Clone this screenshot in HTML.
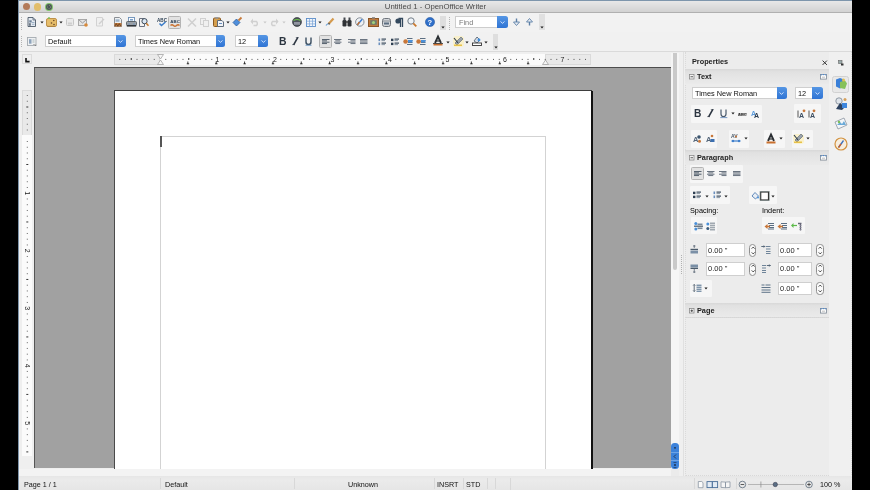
<!DOCTYPE html>
<html><head><meta charset="utf-8">
<style>
*{margin:0;padding:0;box-sizing:border-box}
html,body{width:870px;height:490px;overflow:hidden;background:#000;font-family:"Liberation Sans",sans-serif}
.a{position:absolute}
.t{white-space:nowrap;line-height:1.2;will-change:transform}
svg{overflow:visible;will-change:transform}
</style></head><body>
<div class="a" style="left:0px;top:0px;width:870px;height:490px;background:#000"></div>
<div class="a" style="left:18px;top:0px;width:834.4px;height:490px;background:#efefef"></div>
<div class="a" style="left:18px;top:0px;width:1.2px;height:490px;background:#7f95ab"></div>
<div class="a" style="left:19px;top:0px;width:833.4px;height:13px;background:linear-gradient(#e8e8e8,#d2d2d2);border-top:1px solid #7e96ac;border-bottom:1px solid #b0b0b0"></div>
<div class="a t" style="left:19px;top:1.7px;font-size:7.75px;color:#4a4a4a;width:833px;text-align:center">Untitled 1 - OpenOffice Writer</div>
<div class="a" style="left:22.5px;top:2.7px;width:7.6px;height:7.6px;border-radius:50%;background:#b37a58"></div>
<div class="a" style="left:33.6px;top:2.8px;width:7.8px;height:7.8px;border-radius:50%;background:#e2be6a"></div>
<div class="a" style="left:45.1px;top:2.7px;width:8px;height:8px;border-radius:50%;background:#80c46a"></div>
<svg class="a" style="left:45px;top:2.8px" width="8" height="8" viewBox="0 0 8 8"><circle cx="4" cy="4" r="3" fill="#4b5059"/><circle cx="4" cy="4" r="1.7" fill="none" stroke="#8fbf7a" stroke-width="0.7" stroke-dasharray="0.9 0.9"/></svg>
<div class="a" style="left:19px;top:13px;width:833.4px;height:19px;background:#f2f2f2"></div>
<div class="a" style="left:19px;top:32px;width:833.4px;height:19px;background:#f1f1f1"></div>
<div class="a" style="left:19px;top:51px;width:833.4px;height:1px;background:#dadada"></div>
<div class="a" style="left:21px;top:17px;width:1px;height:1px;background:#b4b4b4"></div>
<div class="a" style="left:21px;top:19px;width:1px;height:1px;background:#b4b4b4"></div>
<div class="a" style="left:21px;top:21px;width:1px;height:1px;background:#b4b4b4"></div>
<div class="a" style="left:21px;top:23px;width:1px;height:1px;background:#b4b4b4"></div>
<div class="a" style="left:21px;top:25px;width:1px;height:1px;background:#b4b4b4"></div>
<div class="a" style="left:21px;top:27px;width:1px;height:1px;background:#b4b4b4"></div>
<div class="a" style="left:21px;top:29px;width:1px;height:1px;background:#b4b4b4"></div>
<div class="a" style="left:21px;top:36px;width:1px;height:1px;background:#b4b4b4"></div>
<div class="a" style="left:21px;top:38px;width:1px;height:1px;background:#b4b4b4"></div>
<div class="a" style="left:21px;top:40px;width:1px;height:1px;background:#b4b4b4"></div>
<div class="a" style="left:21px;top:42px;width:1px;height:1px;background:#b4b4b4"></div>
<div class="a" style="left:21px;top:44px;width:1px;height:1px;background:#b4b4b4"></div>
<div class="a" style="left:21px;top:46px;width:1px;height:1px;background:#b4b4b4"></div>
<div class="a" style="left:449px;top:17px;width:1px;height:1px;background:#b4b4b4"></div>
<div class="a" style="left:449px;top:19px;width:1px;height:1px;background:#b4b4b4"></div>
<div class="a" style="left:449px;top:21px;width:1px;height:1px;background:#b4b4b4"></div>
<div class="a" style="left:449px;top:23px;width:1px;height:1px;background:#b4b4b4"></div>
<div class="a" style="left:449px;top:25px;width:1px;height:1px;background:#b4b4b4"></div>
<div class="a" style="left:449px;top:27px;width:1px;height:1px;background:#b4b4b4"></div>
<div class="a" style="left:449px;top:29px;width:1px;height:1px;background:#b4b4b4"></div>
<svg class="a" style="left:27px;top:17px" width="10" height="10" viewBox="0 0 10 10"><path d="M1 0.5h5l2.5 2.5v6.5h-7.5z" fill="#e3e9f0" stroke="#4a5868" stroke-width="0.9"/><path d="M6 0.5v2.5h2.5" fill="none" stroke="#4a5868" stroke-width="0.7"/><rect x="2.3" y="3.3" width="2.4" height="2.2" fill="#6d8299"/><rect x="2.3" y="6.2" width="1.3" height="2.6" fill="#3a4756"/><path d="M5 5.5h2.5M5 7.3h2.5" stroke="#8aa2bb" stroke-width="0.8"/></svg>
<svg class="a" style="left:39.5px;top:20.5px" width="4" height="3" viewBox="0 0 4 3"><path d="M0.4 0.6h3.2L2 2.4z" fill="#1a1a1a"/></svg>
<svg class="a" style="left:45.5px;top:17px" width="11" height="10" viewBox="0 0 11 10"><rect x="0.5" y="1.5" width="10" height="8" rx="1.5" fill="#e6bd6a" stroke="#b98a3e" stroke-width="0.9"/><circle cx="7.8" cy="3.5" r="0.8" fill="#6a4a2a"/><circle cx="5.5" cy="6" r="0.8" fill="#6a4a2a"/><circle cx="8" cy="7.5" r="0.8" fill="#6a4a2a"/><rect x="2" y="0.3" width="2" height="1.5" fill="#7fc05a"/><path d="M1.5 9.3h8" stroke="#8a6a3a" stroke-width="0.8" stroke-dasharray="1 1"/></svg>
<svg class="a" style="left:58.5px;top:20.5px" width="4" height="3" viewBox="0 0 4 3"><path d="M0.4 0.6h3.2L2 2.4z" fill="#1a1a1a"/></svg>
<svg class="a" style="left:66px;top:18px" width="8" height="8" viewBox="0 0 8 8"><rect x="0.5" y="0.5" width="7" height="7" rx="1" fill="#e9e9e9" stroke="#c6c6c6"/><rect x="2" y="4.5" width="4" height="2" fill="#cfcfcf"/></svg>
<svg class="a" style="left:78px;top:19px" width="10" height="8" viewBox="0 0 10 8"><rect x="0.5" y="0.5" width="8" height="6" fill="#e4e4e4" stroke="#a9a9a9"/><path d="M0.5 0.5l4 3.5l4-3.5" fill="none" stroke="#9a9a9a"/><circle cx="8" cy="6" r="1.8" fill="#d8893a"/></svg>
<svg class="a" style="left:96px;top:17px" width="9" height="10" viewBox="0 0 9 10"><path d="M0.5 0.5h6v8.5h-6z" fill="#f0f0f0" stroke="#d2d2d2"/><path d="M3 7l5-5" stroke="#cfcfcf" stroke-width="1.4"/></svg>
<svg class="a" style="left:114px;top:17px" width="8" height="10" viewBox="0 0 8 10"><path d="M0.5 0.5h5l2 2v7h-7z" fill="#eef0f2" stroke="#8a8f94"/><rect x="1.5" y="2.3" width="4" height="2.5" fill="#9fb6cc"/><rect x="0.5" y="6" width="7" height="3.5" fill="#c27a3c"/><path d="M0.8 9.2l1.5-2.6l1.5 2.6l1.5-2.6l1.5 2.6" fill="none" stroke="#5a3a1e" stroke-width="0.8"/></svg>
<svg class="a" style="left:125.5px;top:17px" width="11" height="10" viewBox="0 0 11 10"><rect x="2.5" y="0.5" width="6" height="4.5" fill="#fafcff" stroke="#6a8fb8" stroke-width="0.9"/><rect x="4" y="2" width="3" height="1.5" fill="#7aa0c8"/><rect x="0.5" y="4.5" width="10" height="4" rx="1" fill="#9aa0a6" stroke="#555b61" stroke-width="0.9"/><rect x="0.8" y="8" width="9.4" height="1.6" fill="#2f3439"/><circle cx="3" cy="7" r="0.6" fill="#4a86d0"/><circle cx="8" cy="7" r="0.6" fill="#4a86d0"/></svg>
<svg class="a" style="left:139px;top:17px" width="10" height="10" viewBox="0 0 10 10"><path d="M0.5 1.5h5v8h-5z" fill="#f3f3f3" stroke="#6b7280"/><circle cx="5.5" cy="4.2" r="2.6" fill="#dbe7f3" stroke="#2d3b4a" stroke-width="0.9"/><path d="M7.3 6.2l2.2 2.6" stroke="#c67a2e" stroke-width="1.5"/></svg>
<svg class="a" style="left:156.5px;top:17px" width="10" height="10" viewBox="0 0 10 10"><text x="0" y="4.6" font-family="Liberation Sans" font-size="4.6" font-weight="bold" fill="#2f4256">ABC</text><path d="M2.5 6.5l2 2l4-3.5" fill="none" stroke="#3a7cc9" stroke-width="1.5"/></svg>
<div class="a" style="left:168px;top:16px;width:13px;height:12.5px;background:#e2e2e2;border:1px solid #b4b4b4;border-radius:1.5px"></div>
<svg class="a" style="left:169.5px;top:17.5px" width="10" height="10" viewBox="0 0 10 10"><text x="0.3" y="4.8" font-family="Liberation Sans" font-size="4.4" font-weight="bold" fill="#2f4256">ABC</text><path d="M0.5 7.5q1.5-1.5 3 0t3 0t3 0" fill="none" stroke="#c9702e" stroke-width="1.4"/></svg>
<svg class="a" style="left:187px;top:17.5px" width="10" height="9" viewBox="0 0 10 9"><path d="M1 0.5l8 8M9 0.5l-8 8" stroke="#d0d0d0" stroke-width="1.6"/></svg>
<svg class="a" style="left:200px;top:17.5px" width="9" height="9" viewBox="0 0 9 9"><rect x="0.5" y="0.5" width="5" height="6" fill="#f0f0f0" stroke="#d0d0d0"/><rect x="3.5" y="2.5" width="5" height="6" fill="#f0f0f0" stroke="#d0d0d0"/></svg>
<svg class="a" style="left:212.5px;top:17px" width="11" height="10" viewBox="0 0 11 10"><rect x="0.5" y="1" width="7" height="8.5" rx="1" fill="#d59f4e" stroke="#8a5a22"/><rect x="2.3" y="0" width="3" height="1.8" fill="#9a9a9a"/><path d="M4.5 3.5h4.5l1.5 1.5v4.5h-6z" fill="#f2f4f7" stroke="#5e6b7a"/><path d="M6 6.5h3" stroke="#6a8fc0"/></svg>
<svg class="a" style="left:225.8px;top:20.5px" width="4" height="3" viewBox="0 0 4 3"><path d="M0.4 0.6h3.2L2 2.4z" fill="#1a1a1a"/></svg>
<svg class="a" style="left:232px;top:17px" width="11" height="10" viewBox="0 0 11 10"><path d="M1 5.5l3.5-3.5l3.5 3.5l-3.5 3.5z" fill="#4f8fdc" stroke="#2d5e9c" stroke-width="0.8"/><path d="M6.5 3.5l3-3" stroke="#c77a3a" stroke-width="1.8"/></svg>
<svg class="a" style="left:249.5px;top:18px" width="10" height="8" viewBox="0 0 10 8"><path d="M1 3.5h5.5a2.8 2.8 0 0 1 0 4h-3" fill="none" stroke="#d0d0d0" stroke-width="1.5"/><path d="M0.5 3.5l2.5-3v6z" fill="#d0d0d0"/></svg>
<svg class="a" style="left:262.8px;top:21px" width="4" height="3" viewBox="0 0 4 3"><path d="M0.4 0.6h3.2L2 2.4z" fill="#c8c8c8"/></svg>
<svg class="a" style="left:268.5px;top:18px" width="10" height="8" viewBox="0 0 10 8"><path d="M9 3.5h-5.5a2.8 2.8 0 0 0 0 4h3" fill="none" stroke="#d0d0d0" stroke-width="1.5"/><path d="M9.5 3.5l-2.5-3v6z" fill="#d0d0d0"/></svg>
<svg class="a" style="left:281.5px;top:21px" width="4" height="3" viewBox="0 0 4 3"><path d="M0.4 0.6h3.2L2 2.4z" fill="#c8c8c8"/></svg>
<svg class="a" style="left:292px;top:17px" width="10" height="10" viewBox="0 0 10 10"><circle cx="5" cy="5" r="4.5" fill="#4e545c" stroke="#2a2e33" stroke-width="0.6"/><path d="M1.5 3.5q3.5-2 7 0" stroke="#6cc04a" stroke-width="1.2" fill="none"/><rect x="2" y="5" width="6" height="2.5" fill="#dfe6ee"/><path d="M3 5v2.5M5 5v2.5M7 5v2.5" stroke="#445"/></svg>
<svg class="a" style="left:305.5px;top:17.5px" width="10" height="9" viewBox="0 0 10 9"><rect x="0.5" y="0.5" width="9" height="8" fill="#f2f6fb" stroke="#5a8cc8" stroke-width="0.9"/><path d="M0.5 3.2h9M0.5 5.9h9M3.5 0.5v8M6.5 0.5v8" stroke="#7aa3d6" stroke-width="0.7"/></svg>
<svg class="a" style="left:318.3px;top:20.5px" width="4" height="3" viewBox="0 0 4 3"><path d="M0.4 0.6h3.2L2 2.4z" fill="#1a1a1a"/></svg>
<svg class="a" style="left:324.5px;top:17px" width="10" height="10" viewBox="0 0 10 10"><path d="M1 8.5q2-3 4-1" fill="none" stroke="#6aa0d8" stroke-width="1.2"/><path d="M3.5 7l5-5.5" stroke="#d49a4e" stroke-width="2.2"/><path d="M3.5 7l1-1" stroke="#555" stroke-width="1.4"/></svg>
<svg class="a" style="left:342px;top:17px" width="10" height="10" viewBox="0 0 10 10"><rect x="0.5" y="3" width="4" height="6.5" rx="1.2" fill="#2e3135"/><rect x="5.5" y="3" width="4" height="6.5" rx="1.2" fill="#2e3135"/><rect x="1.5" y="0.5" width="2" height="3" fill="#45494e"/><rect x="6.5" y="0.5" width="2" height="3" fill="#45494e"/><rect x="4" y="4" width="2" height="2" fill="#555"/></svg>
<svg class="a" style="left:355px;top:17px" width="10" height="10" viewBox="0 0 10 10"><circle cx="4.8" cy="5" r="4.2" fill="#eef1f4" stroke="#7d8690" stroke-width="0.9"/><path d="M7.2 2.2L2.4 7.8" stroke="#3a7cd2" stroke-width="1.4"/><path d="M4.5 5L2.4 7.8" stroke="#c8702c" stroke-width="1.4"/></svg>
<svg class="a" style="left:367.5px;top:17px" width="11" height="10" viewBox="0 0 11 10"><rect x="0.5" y="1.5" width="10" height="8" fill="#c07a3e" stroke="#8a5526"/><rect x="2.2" y="3.2" width="6.6" height="4.6" fill="#6d7a6a"/><circle cx="5.5" cy="5.5" r="1.6" fill="#9fd07a"/><rect x="4" y="0" width="3" height="1.5" fill="#999"/></svg>
<svg class="a" style="left:381.5px;top:17.5px" width="9" height="9" viewBox="0 0 9 9"><rect x="0.5" y="0.5" width="8" height="8" rx="2" fill="#d3d6da" stroke="#6f757c"/><path d="M1 3h7" stroke="#8a9097"/><rect x="2" y="4.5" width="5" height="2" fill="#5d6e82"/></svg>
<svg class="a" style="left:395px;top:17.5px" width="8" height="9" viewBox="0 0 8 9"><path d="M3.5 0.5h4v8.5M5.5 0.5v8.5" stroke="#34495e" stroke-width="1.3" fill="none"/><circle cx="3" cy="3" r="2.6" fill="#34495e"/></svg>
<svg class="a" style="left:407px;top:17px" width="10" height="10" viewBox="0 0 10 10"><circle cx="4" cy="4" r="3.2" fill="#eef3f8" stroke="#747d87" stroke-width="1"/><path d="M6.3 6.3l3 3" stroke="#c9782e" stroke-width="1.8"/></svg>
<svg class="a" style="left:425px;top:17px" width="10" height="10" viewBox="0 0 10 10"><circle cx="5" cy="5" r="4.6" fill="#2f6fc9" stroke="#1d4f96" stroke-width="0.5"/><text x="2.5" y="8" font-family="Liberation Sans" font-size="7.5" font-weight="bold" fill="#fff">?</text></svg>
<div class="a" style="left:440px;top:15.8px;width:5.5px;height:14.4px;background:#dedede"></div>
<svg class="a" style="left:441px;top:26px" width="4" height="3" viewBox="0 0 4 3"><path d="M0.4 0.6h3.2L2 2.4z" fill="#1a1a1a"/></svg>
<div class="a" style="left:455px;top:16.4px;width:42.5px;height:11.6px;background:#fff;border:1px solid #cdcdcd;border-right:none"></div>
<div class="a t" style="left:458.5px;top:18.7px;font-size:7.3px;color:#7a7a7a;">Find</div>
<div class="a" style="left:497px;top:16.4px;width:10.5px;height:11.6px;background:linear-gradient(#5596e4,#2f74d4);border-radius:0 2.5px 2.5px 0"></div>
<svg class="a" style="left:499.8px;top:20.7px" width="5" height="3" viewBox="0 0 5 3"><path d="M0.5 0.5L2.5 2.3L4.5 0.5" fill="none" stroke="#dfeaff" stroke-width="0.9"/></svg>
<svg class="a" style="left:512.5px;top:17.5px" width="7" height="8" viewBox="0 0 7 8"><path d="M3.5 0.5v5" stroke="#5c7fa6" stroke-width="1.4"/><path d="M0.5 4l3 3.5l3-3.5z" fill="#e9eef4" stroke="#5c7fa6" stroke-width="0.9"/></svg>
<svg class="a" style="left:525.5px;top:17.5px" width="7" height="8" viewBox="0 0 7 8"><path d="M3.5 7.5v-5" stroke="#5c7fa6" stroke-width="1.4"/><path d="M0.5 4l3-3.5l3 3.5z" fill="#e9eef4" stroke="#5c7fa6" stroke-width="0.9"/></svg>
<div class="a" style="left:539px;top:14px;width:5.8px;height:16.2px;background:#e0e0e0"></div>
<svg class="a" style="left:540px;top:26px" width="4" height="3" viewBox="0 0 4 3"><path d="M0.4 0.6h3.2L2 2.4z" fill="#1a1a1a"/></svg>
<svg class="a" style="left:26.5px;top:36.5px" width="10" height="9" viewBox="0 0 10 9"><rect x="0.5" y="0.5" width="8.5" height="8" fill="#eef0f2" stroke="#a4aab0" stroke-width="0.9"/><rect x="2" y="2.2" width="2.5" height="4.5" fill="#8ea4bc"/><path d="M5.5 3h2M5.5 5h2" stroke="#9aa" stroke-width="0.8"/><path d="M6 7.5h3v1" stroke="#b8b8b8"/></svg>
<div class="a" style="left:45px;top:35.2px;width:70.7px;height:12.199999999999996px;background:#fff;border:1px solid #cfcfcf;border-right:none"></div>
<div class="a" style="left:115.7px;top:35.2px;width:10.299999999999997px;height:12.199999999999996px;background:linear-gradient(#5596e4,#2f74d4);border-radius:0 2.5px 2.5px 0"></div>
<svg class="a" style="left:118.35px;top:39.8px" width="5" height="3" viewBox="0 0 5 3"><path d="M0.5 0.5L2.5 2.3L4.5 0.5" fill="none" stroke="#dfeaff" stroke-width="0.9"/></svg>
<div class="a t" style="left:48px;top:37.8px;font-size:7.35px;color:#111;">Default</div>
<div class="a" style="left:135px;top:35.2px;width:81px;height:12.199999999999996px;background:#fff;border:1px solid #cfcfcf;border-right:none"></div>
<div class="a" style="left:216px;top:35.2px;width:9px;height:12.199999999999996px;background:linear-gradient(#5596e4,#2f74d4);border-radius:0 2.5px 2.5px 0"></div>
<svg class="a" style="left:218.0px;top:39.8px" width="5" height="3" viewBox="0 0 5 3"><path d="M0.5 0.5L2.5 2.3L4.5 0.5" fill="none" stroke="#dfeaff" stroke-width="0.9"/></svg>
<div class="a t" style="left:138px;top:37.8px;font-size:7.35px;color:#111;">Times New Roman</div>
<div class="a" style="left:235.4px;top:35.2px;width:22.99999999999997px;height:12.199999999999996px;background:#fff;border:1px solid #cfcfcf;border-right:none"></div>
<div class="a" style="left:258.4px;top:35.2px;width:10.100000000000023px;height:12.199999999999996px;background:linear-gradient(#5596e4,#2f74d4);border-radius:0 2.5px 2.5px 0"></div>
<svg class="a" style="left:260.95px;top:39.8px" width="5" height="3" viewBox="0 0 5 3"><path d="M0.5 0.5L2.5 2.3L4.5 0.5" fill="none" stroke="#dfeaff" stroke-width="0.9"/></svg>
<div class="a t" style="left:238.4px;top:37.8px;font-size:7.35px;color:#111;">12</div>
<div class="a t" style="left:278.8px;top:35.9px;font-size:10.4px;color:#2b3440;font-weight:bold;">B</div>
<svg class="a" style="left:291.8px;top:37px" width="7" height="8" viewBox="0 0 7 8"><path d="M5.8 0.3L1.6 7.8" stroke="#2b3440" stroke-width="1.6"/><path d="M3.8 0.5h3M0 7.6h3" stroke="#2b3440" stroke-width="0.5"/></svg>
<svg class="a" style="left:305px;top:37px" width="7" height="9" viewBox="0 0 7 9"><path d="M1 0.5v4.5a2.5 2.5 0 0 0 5 0v-4.5" fill="none" stroke="#3a4d60" stroke-width="1.4"/><path d="M0.5 8.3h6" stroke="#7aa0c8" stroke-width="1"/></svg>
<div class="a" style="left:319px;top:35.2px;width:13px;height:12.399999999999999px;background:#e2e2e2;border:1px solid #b4b4b4;border-radius:1.5px"></div>
<svg class="a" style="left:321.8px;top:38.8px" width="7.5" height="5.5" viewBox="0 0 7.5 5.5"><rect x="0" y="0.0" width="7.5" height="1" fill="#55616e"/><rect x="0" y="1.35" width="5" height="1" fill="#55616e"/><rect x="0" y="2.7" width="7.5" height="1" fill="#55616e"/><rect x="0" y="4.050000000000001" width="5" height="1" fill="#55616e"/></svg>
<svg class="a" style="left:334.3px;top:38.8px" width="7.5" height="5.5" viewBox="0 0 7.5 5.5"><rect x="0.0" y="0.0" width="7.5" height="1" fill="#6a7480"/><rect x="1.25" y="1.35" width="5" height="1" fill="#6a7480"/><rect x="0.0" y="2.7" width="7.5" height="1" fill="#6a7480"/><rect x="1.25" y="4.050000000000001" width="5" height="1" fill="#6a7480"/></svg>
<svg class="a" style="left:347.5px;top:38.8px" width="7.5" height="5.5" viewBox="0 0 7.5 5.5"><rect x="0.0" y="0.0" width="7.5" height="1" fill="#6a7480"/><rect x="2.5" y="1.35" width="5" height="1" fill="#6a7480"/><rect x="0.0" y="2.7" width="7.5" height="1" fill="#6a7480"/><rect x="2.5" y="4.050000000000001" width="5" height="1" fill="#6a7480"/></svg>
<svg class="a" style="left:360.4px;top:38.8px" width="7.5" height="5.5" viewBox="0 0 7.5 5.5"><rect x="0" y="0.0" width="7.5" height="1" fill="#6a7480"/><rect x="0" y="1.35" width="7.5" height="1" fill="#6a7480"/><rect x="0" y="2.7" width="7.5" height="1" fill="#6a7480"/><rect x="0" y="4.050000000000001" width="7.5" height="1" fill="#6a7480"/></svg>
<svg class="a" style="left:378.2px;top:38px" width="8" height="8" viewBox="0 0 8 8"><rect x="0.5" y="0.5" width="1.6" height="2.6" fill="#6b8fbd"/><rect x="3.5" y="0.5" width="4.5" height="1.2" fill="#3f4f60"/><rect x="3.5" y="2.2" width="3.5" height="0.9" fill="#7a8a9a"/><rect x="0.5" y="4.5" width="1.6" height="2.6" fill="#6b8fbd"/><rect x="3.5" y="4.5" width="4.5" height="1.2" fill="#3f4f60"/><rect x="3.5" y="6.2" width="3.5" height="0.9" fill="#7a8a9a"/></svg>
<svg class="a" style="left:390.6px;top:38px" width="8" height="8" viewBox="0 0 8 8"><rect x="0" y="0.7" width="2.4" height="2.4" fill="#2e3f52"/><rect x="3.5" y="0.5" width="4.5" height="1.2" fill="#3f4f60"/><rect x="3.5" y="2.2" width="3.5" height="0.9" fill="#7a8a9a"/><rect x="0" y="4.7" width="2.4" height="2.4" fill="#2e3f52"/><rect x="3.5" y="4.5" width="4.5" height="1.2" fill="#3f4f60"/><rect x="3.5" y="6.2" width="3.5" height="0.9" fill="#7a8a9a"/></svg>
<svg class="a" style="left:403px;top:36.5px" width="10" height="9" viewBox="0 0 10 9"><path d="M4 1.5h5.5M5 3.5h4.5M5 5.5h4.5M4 7.5h5.5" stroke="#4a5f75" stroke-width="0.9"/><rect x="5" y="3" width="4.5" height="2.4" fill="#4a90d9"/><circle cx="2.6" cy="4.5" r="2.3" fill="#c8773a"/></svg>
<svg class="a" style="left:415.7px;top:36.5px" width="10" height="9" viewBox="0 0 10 9"><path d="M4 1.5h5.5M5 3.5h4.5M5 5.5h4.5M4 7.5h5.5" stroke="#4a5f75" stroke-width="0.9"/><rect x="5" y="3" width="4.5" height="2.4" fill="#4a90d9"/><circle cx="2.6" cy="4.5" r="2.3" fill="#c8773a"/></svg>
<svg class="a" style="left:433px;top:36px" width="10" height="10" viewBox="0 0 10 10"><path d="M2 7l3-6.5l3 6.5" fill="none" stroke="#2b2f33" stroke-width="1.8"/><path d="M3.3 5h3.4" stroke="#2b2f33" stroke-width="1.2"/><rect x="0.5" y="7.5" width="9" height="2" fill="#c9702e"/><rect x="0" y="7" width="10" height="0.8" fill="#333"/></svg>
<svg class="a" style="left:446px;top:40.5px" width="4" height="3" viewBox="0 0 4 3"><path d="M0.4 0.6h3.2L2 2.4z" fill="#1a1a1a"/></svg>
<svg class="a" style="left:452.5px;top:35.5px" width="11" height="11" viewBox="0 0 11 11"><rect x="0" y="0" width="11" height="11" rx="3" fill="#fbf0c2" opacity="0.8"/><path d="M2 7l6-6l2 2l-6 6z" fill="#9aa3ad" stroke="#55606b" stroke-width="0.6"/><path d="M1 2l4 5" stroke="#33414f" stroke-width="1.2"/><rect x="1" y="8.5" width="8" height="1.5" fill="#e7c14a"/></svg>
<svg class="a" style="left:465px;top:40.5px" width="4" height="3" viewBox="0 0 4 3"><path d="M0.4 0.6h3.2L2 2.4z" fill="#1a1a1a"/></svg>
<svg class="a" style="left:471.5px;top:36px" width="11" height="10" viewBox="0 0 11 10"><path d="M2 5l3-4l3 3l-3 3z" fill="#d7dee6" stroke="#465567" stroke-width="0.8"/><circle cx="7" cy="4" r="1.4" fill="#3d8ee0"/><rect x="0.5" y="7" width="9" height="2.5" fill="#fff" stroke="#333" stroke-width="0.9"/></svg>
<svg class="a" style="left:484.2px;top:40.5px" width="4" height="3" viewBox="0 0 4 3"><path d="M0.4 0.6h3.2L2 2.4z" fill="#1a1a1a"/></svg>
<div class="a" style="left:493.3px;top:34px;width:4.8px;height:15.6px;background:#dedede"></div>
<svg class="a" style="left:493.8px;top:45.6px" width="4" height="3" viewBox="0 0 4 3"><path d="M0.4 0.6h3.2L2 2.4z" fill="#1a1a1a"/></svg>
<div class="a" style="left:19px;top:52px;width:641px;height:15px;background:#efefef"></div>
<div class="a" style="left:21.5px;top:54px;width:10.3px;height:9.8px;border:1px solid #dcdcdc"></div>
<svg class="a" style="left:24.5px;top:57.5px" width="5" height="5" viewBox="0 0 5 5"><path d="M1 0v3.6h3.6" fill="none" stroke="#111" stroke-width="1.6"/></svg>
<div class="a" style="left:114px;top:54px;width:477px;height:10.5px;background:#fbfbfb"></div>
<div class="a" style="left:114px;top:54px;width:46px;height:10.5px;background:#e9e9e9;border:1px solid #dadada"></div>
<div class="a" style="left:545px;top:54px;width:45.5px;height:10.5px;background:#e9e9e9;border:1px solid #dadada"></div>
<svg class="a" style="left:114px;top:54px" width="477" height="11" viewBox="0 0 477 11"><rect x="5.25" y="4.9" width="1" height="1" fill="#555"/><rect x="11.0" y="4.9" width="1" height="1" fill="#555"/><rect x="16.75" y="4" width="1" height="2" fill="#333"/><rect x="22.5" y="4.9" width="1" height="1" fill="#555"/><rect x="28.25" y="4.9" width="1" height="1" fill="#555"/><rect x="34.0" y="4.9" width="1" height="1" fill="#555"/><rect x="39.75" y="4.9" width="1" height="1" fill="#555"/><rect x="51.25" y="4.9" width="1" height="1" fill="#555"/><rect x="57.0" y="4.9" width="1" height="1" fill="#555"/><rect x="62.75" y="4.9" width="1" height="1" fill="#555"/><rect x="68.5" y="4.9" width="1" height="1" fill="#555"/><rect x="74.25" y="4" width="1" height="2" fill="#333"/><rect x="80.0" y="4.9" width="1" height="1" fill="#555"/><rect x="85.75" y="4.9" width="1" height="1" fill="#555"/><rect x="91.5" y="4.9" width="1" height="1" fill="#555"/><rect x="97.25" y="4.9" width="1" height="1" fill="#555"/><text x="103.5" y="8.2" text-anchor="middle" font-family="Liberation Sans" font-size="7" fill="#222">1</text><rect x="108.75" y="4.9" width="1" height="1" fill="#555"/><rect x="114.5" y="4.9" width="1" height="1" fill="#555"/><rect x="120.25" y="4.9" width="1" height="1" fill="#555"/><rect x="126.0" y="4.9" width="1" height="1" fill="#555"/><rect x="131.75" y="4" width="1" height="2" fill="#333"/><rect x="137.5" y="4.9" width="1" height="1" fill="#555"/><rect x="143.25" y="4.9" width="1" height="1" fill="#555"/><rect x="149.0" y="4.9" width="1" height="1" fill="#555"/><rect x="154.75" y="4.9" width="1" height="1" fill="#555"/><text x="161.0" y="8.2" text-anchor="middle" font-family="Liberation Sans" font-size="7" fill="#222">2</text><rect x="166.25" y="4.9" width="1" height="1" fill="#555"/><rect x="172.0" y="4.9" width="1" height="1" fill="#555"/><rect x="177.75" y="4.9" width="1" height="1" fill="#555"/><rect x="183.5" y="4.9" width="1" height="1" fill="#555"/><rect x="189.25" y="4" width="1" height="2" fill="#333"/><rect x="195.0" y="4.9" width="1" height="1" fill="#555"/><rect x="200.75" y="4.9" width="1" height="1" fill="#555"/><rect x="206.5" y="4.9" width="1" height="1" fill="#555"/><rect x="212.25" y="4.9" width="1" height="1" fill="#555"/><text x="218.5" y="8.2" text-anchor="middle" font-family="Liberation Sans" font-size="7" fill="#222">3</text><rect x="223.75" y="4.9" width="1" height="1" fill="#555"/><rect x="229.5" y="4.9" width="1" height="1" fill="#555"/><rect x="235.25" y="4.9" width="1" height="1" fill="#555"/><rect x="241.0" y="4.9" width="1" height="1" fill="#555"/><rect x="246.75" y="4" width="1" height="2" fill="#333"/><rect x="252.5" y="4.9" width="1" height="1" fill="#555"/><rect x="258.25" y="4.9" width="1" height="1" fill="#555"/><rect x="264.0" y="4.9" width="1" height="1" fill="#555"/><rect x="269.75" y="4.9" width="1" height="1" fill="#555"/><text x="276.0" y="8.2" text-anchor="middle" font-family="Liberation Sans" font-size="7" fill="#222">4</text><rect x="281.25" y="4.9" width="1" height="1" fill="#555"/><rect x="287.0" y="4.9" width="1" height="1" fill="#555"/><rect x="292.75" y="4.9" width="1" height="1" fill="#555"/><rect x="298.5" y="4.9" width="1" height="1" fill="#555"/><rect x="304.25" y="4" width="1" height="2" fill="#333"/><rect x="310.0" y="4.9" width="1" height="1" fill="#555"/><rect x="315.75" y="4.9" width="1" height="1" fill="#555"/><rect x="321.5" y="4.9" width="1" height="1" fill="#555"/><rect x="327.25" y="4.9" width="1" height="1" fill="#555"/><text x="333.5" y="8.2" text-anchor="middle" font-family="Liberation Sans" font-size="7" fill="#222">5</text><rect x="338.75" y="4.9" width="1" height="1" fill="#555"/><rect x="344.5" y="4.9" width="1" height="1" fill="#555"/><rect x="350.25" y="4.9" width="1" height="1" fill="#555"/><rect x="356.0" y="4.9" width="1" height="1" fill="#555"/><rect x="361.75" y="4" width="1" height="2" fill="#333"/><rect x="367.5" y="4.9" width="1" height="1" fill="#555"/><rect x="373.25" y="4.9" width="1" height="1" fill="#555"/><rect x="379.0" y="4.9" width="1" height="1" fill="#555"/><rect x="384.75" y="4.9" width="1" height="1" fill="#555"/><text x="391.0" y="8.2" text-anchor="middle" font-family="Liberation Sans" font-size="7" fill="#222">6</text><rect x="396.25" y="4.9" width="1" height="1" fill="#555"/><rect x="402.0" y="4.9" width="1" height="1" fill="#555"/><rect x="407.75" y="4.9" width="1" height="1" fill="#555"/><rect x="413.5" y="4.9" width="1" height="1" fill="#555"/><rect x="419.25" y="4" width="1" height="2" fill="#333"/><rect x="425.0" y="4.9" width="1" height="1" fill="#555"/><rect x="430.75" y="4.9" width="1" height="1" fill="#555"/><rect x="436.5" y="4.9" width="1" height="1" fill="#555"/><rect x="442.25" y="4.9" width="1" height="1" fill="#555"/><text x="448.5" y="8.2" text-anchor="middle" font-family="Liberation Sans" font-size="7" fill="#222">7</text><rect x="453.75" y="4.9" width="1" height="1" fill="#555"/><rect x="459.5" y="4.9" width="1" height="1" fill="#555"/><rect x="465.25" y="4.9" width="1" height="1" fill="#555"/><rect x="471.0" y="4.9" width="1" height="1" fill="#555"/><path d="M73.85 7.5v2.5M72.75 9.8h2.4" stroke="#222" stroke-width="0.9"/><path d="M102.19999999999999 7.5v2.5M101.1 9.8h2.4" stroke="#222" stroke-width="0.9"/><path d="M130.55 7.5v2.5M129.45000000000002 9.8h2.4" stroke="#222" stroke-width="0.9"/><path d="M158.89999999999998 7.5v2.5M157.79999999999998 9.8h2.4" stroke="#222" stroke-width="0.9"/><path d="M187.25 7.5v2.5M186.15 9.8h2.4" stroke="#222" stroke-width="0.9"/><path d="M215.60000000000002 7.5v2.5M214.50000000000003 9.8h2.4" stroke="#222" stroke-width="0.9"/><path d="M243.95000000000005 7.5v2.5M242.85000000000005 9.8h2.4" stroke="#222" stroke-width="0.9"/><path d="M272.3 7.5v2.5M271.2 9.8h2.4" stroke="#222" stroke-width="0.9"/><path d="M300.65 7.5v2.5M299.54999999999995 9.8h2.4" stroke="#222" stroke-width="0.9"/><path d="M329.0 7.5v2.5M327.9 9.8h2.4" stroke="#222" stroke-width="0.9"/><path d="M357.35 7.5v2.5M356.25 9.8h2.4" stroke="#222" stroke-width="0.9"/><path d="M385.70000000000005 7.5v2.5M384.6 9.8h2.4" stroke="#222" stroke-width="0.9"/><path d="M414.04999999999995 7.5v2.5M412.94999999999993 9.8h2.4" stroke="#222" stroke-width="0.9"/></svg>
<svg class="a" style="left:156.5px;top:54px" width="7" height="11" viewBox="0 0 7 11"><path d="M0.5 0.5h6l-3 4.5z M0.5 10.5h6l-3-4.5z" fill="#f6f6f6" stroke="#9a9a9a" stroke-width="0.7"/></svg>
<svg class="a" style="left:541.5px;top:58px" width="7" height="7" viewBox="0 0 7 7"><path d="M0.5 6.5h6l-3-4.5z" fill="#f6f6f6" stroke="#9a9a9a" stroke-width="0.7"/></svg>
<div class="a" style="left:34px;top:67px;width:637px;height:401.3px;background:#a1a1a1;border-top:1px solid #4d4d4d;border-left:1px solid #555"></div>
<div class="a" style="left:21.5px;top:89.8px;width:10.3px;height:366.3px;background:#fbfbfb"></div>
<div class="a" style="left:21.5px;top:89.8px;width:10.3px;height:45.7px;background:#e9e9e9;border:1px solid #dadada;border-bottom:none"></div>
<svg class="a" style="left:21.5px;top:89.8px" width="10.3" height="379" viewBox="0 0 10.3 379"><rect x="4.8" y="4.950000000000003" width="1" height="1" fill="#666"/><rect x="4.8" y="10.700000000000003" width="1" height="1" fill="#666"/><rect x="4.3" y="16.450000000000003" width="2" height="1" fill="#333"/><rect x="4.8" y="22.200000000000003" width="1" height="1" fill="#666"/><rect x="4.8" y="27.950000000000003" width="1" height="1" fill="#666"/><rect x="4.8" y="33.7" width="1" height="1" fill="#666"/><rect x="4.8" y="39.45" width="1" height="1" fill="#666"/><rect x="4.8" y="50.95" width="1" height="1" fill="#666"/><rect x="4.8" y="56.7" width="1" height="1" fill="#666"/><rect x="4.8" y="62.45" width="1" height="1" fill="#666"/><rect x="4.8" y="68.2" width="1" height="1" fill="#666"/><rect x="4.3" y="73.95" width="2" height="1" fill="#333"/><rect x="4.8" y="79.7" width="1" height="1" fill="#666"/><rect x="4.8" y="85.45" width="1" height="1" fill="#666"/><rect x="4.8" y="91.2" width="1" height="1" fill="#666"/><rect x="4.8" y="96.95" width="1" height="1" fill="#666"/><text x="0" y="0" transform="translate(5.2 103.2) rotate(90)" text-anchor="middle" dominant-baseline="central" font-family="Liberation Sans" font-size="7" fill="#222">1</text><rect x="4.8" y="108.45" width="1" height="1" fill="#666"/><rect x="4.8" y="114.2" width="1" height="1" fill="#666"/><rect x="4.8" y="119.95" width="1" height="1" fill="#666"/><rect x="4.8" y="125.7" width="1" height="1" fill="#666"/><rect x="4.3" y="131.45" width="2" height="1" fill="#333"/><rect x="4.8" y="137.2" width="1" height="1" fill="#666"/><rect x="4.8" y="142.95" width="1" height="1" fill="#666"/><rect x="4.8" y="148.7" width="1" height="1" fill="#666"/><rect x="4.8" y="154.45" width="1" height="1" fill="#666"/><text x="0" y="0" transform="translate(5.2 160.7) rotate(90)" text-anchor="middle" dominant-baseline="central" font-family="Liberation Sans" font-size="7" fill="#222">2</text><rect x="4.8" y="165.95" width="1" height="1" fill="#666"/><rect x="4.8" y="171.7" width="1" height="1" fill="#666"/><rect x="4.8" y="177.45" width="1" height="1" fill="#666"/><rect x="4.8" y="183.2" width="1" height="1" fill="#666"/><rect x="4.3" y="188.95" width="2" height="1" fill="#333"/><rect x="4.8" y="194.7" width="1" height="1" fill="#666"/><rect x="4.8" y="200.45" width="1" height="1" fill="#666"/><rect x="4.8" y="206.2" width="1" height="1" fill="#666"/><rect x="4.8" y="211.95" width="1" height="1" fill="#666"/><text x="0" y="0" transform="translate(5.2 218.2) rotate(90)" text-anchor="middle" dominant-baseline="central" font-family="Liberation Sans" font-size="7" fill="#222">3</text><rect x="4.8" y="223.45" width="1" height="1" fill="#666"/><rect x="4.8" y="229.2" width="1" height="1" fill="#666"/><rect x="4.8" y="234.95" width="1" height="1" fill="#666"/><rect x="4.8" y="240.7" width="1" height="1" fill="#666"/><rect x="4.3" y="246.45" width="2" height="1" fill="#333"/><rect x="4.8" y="252.2" width="1" height="1" fill="#666"/><rect x="4.8" y="257.95" width="1" height="1" fill="#666"/><rect x="4.8" y="263.7" width="1" height="1" fill="#666"/><rect x="4.8" y="269.45" width="1" height="1" fill="#666"/><text x="0" y="0" transform="translate(5.2 275.7) rotate(90)" text-anchor="middle" dominant-baseline="central" font-family="Liberation Sans" font-size="7" fill="#222">4</text><rect x="4.8" y="280.95" width="1" height="1" fill="#666"/><rect x="4.8" y="286.7" width="1" height="1" fill="#666"/><rect x="4.8" y="292.45" width="1" height="1" fill="#666"/><rect x="4.8" y="298.2" width="1" height="1" fill="#666"/><rect x="4.3" y="303.95" width="2" height="1" fill="#333"/><rect x="4.8" y="309.7" width="1" height="1" fill="#666"/><rect x="4.8" y="315.45" width="1" height="1" fill="#666"/><rect x="4.8" y="321.2" width="1" height="1" fill="#666"/><rect x="4.8" y="326.95" width="1" height="1" fill="#666"/><text x="0" y="0" transform="translate(5.2 333.2) rotate(90)" text-anchor="middle" dominant-baseline="central" font-family="Liberation Sans" font-size="7" fill="#222">5</text><rect x="4.8" y="338.45" width="1" height="1" fill="#666"/><rect x="4.8" y="344.2" width="1" height="1" fill="#666"/><rect x="4.8" y="349.95" width="1" height="1" fill="#666"/><rect x="4.8" y="355.7" width="1" height="1" fill="#666"/><rect x="4.3" y="361.45" width="2" height="1" fill="#333"/></svg>
<div class="a" style="left:114px;top:90px;width:478px;height:379px;background:#fff;border-top:1px solid #3e3e3e;border-left:1px solid #4a4a4a"></div>
<div class="a" style="left:591px;top:91px;width:2px;height:378px;background:#111"></div>
<div class="a" style="left:160px;top:136px;width:385.5px;height:333px;border:1px solid #d3d3d3;border-bottom:none"></div>
<div class="a" style="left:160px;top:136px;width:1.8px;height:10.7px;background:#555"></div>
<div class="a" style="left:671px;top:53px;width:7.5px;height:415.5px;background:#f5f5f5"></div>
<div class="a" style="left:673px;top:53px;width:4px;height:216.5px;background:#c9c9c9;border-radius:0 0 2px 2px"></div>
<div class="a" style="left:670.7px;top:443.1px;width:8.3px;height:25.8px;background:#3c82da;border-radius:3.5px"></div>
<div class="a" style="left:670.7px;top:451.5px;width:8.3px;height:0.6px;background:#6ea4e6"></div>
<div class="a" style="left:670.7px;top:460px;width:8.3px;height:0.6px;background:#6ea4e6"></div>
<svg class="a" style="left:671px;top:443.5px" width="8" height="25" viewBox="0 0 8 25"><circle cx="4" cy="3.8" r="0.9" fill="#1b2b44"/><path d="M5 10.5l-2 2l2 2" stroke="#1b2b44" fill="none" stroke-width="0.8"/><circle cx="4" cy="21" r="0.9" fill="#1b2b44"/><path d="M2.5 18.5h3M2.5 23.5h3" stroke="#1b2b44" stroke-width="0.6"/></svg>
<div class="a" style="left:19px;top:468.5px;width:665px;height:8px;background:#f3f3f3"></div>
<div class="a" style="left:670.5px;top:468.5px;width:13px;height:8px;background:#ebebeb"></div>
<div class="a" style="left:678.5px;top:52px;width:5.5px;height:425px;background:#efefef"></div>
<div class="a" style="left:683px;top:52px;width:1px;height:424px;background:#e0e0e0"></div>
<div class="a" style="left:681.3px;top:255px;width:1px;height:1px;background:#b0b0b0"></div>
<div class="a" style="left:681.3px;top:257px;width:1px;height:1px;background:#b0b0b0"></div>
<div class="a" style="left:681.3px;top:259px;width:1px;height:1px;background:#b0b0b0"></div>
<div class="a" style="left:681.3px;top:261px;width:1px;height:1px;background:#b0b0b0"></div>
<div class="a" style="left:681.3px;top:263px;width:1px;height:1px;background:#b0b0b0"></div>
<div class="a" style="left:681.3px;top:265px;width:1px;height:1px;background:#b0b0b0"></div>
<div class="a" style="left:681.3px;top:267px;width:1px;height:1px;background:#b0b0b0"></div>
<div class="a" style="left:681.3px;top:269px;width:1px;height:1px;background:#b0b0b0"></div>
<div class="a" style="left:681.3px;top:271px;width:1px;height:1px;background:#b0b0b0"></div>
<div class="a" style="left:681.3px;top:273px;width:1px;height:1px;background:#b0b0b0"></div>
<div class="a" style="left:685px;top:52px;width:144px;height:424px;background:#ececec;border-left:1px dotted #dadada;border-bottom:1px dotted #d8d8d8"></div>
<div class="a t" style="left:691.6px;top:57.7px;font-size:7.3px;color:#222;font-weight:bold;">Properties</div>
<svg class="a" style="left:821.5px;top:59.6px" width="5.5" height="5.5" viewBox="0 0 5.5 5.5"><path d="M0.6 0.6l4.3 4.3M4.9 0.6l-4.3 4.3" stroke="#333" stroke-width="1"/></svg>
<div class="a" style="left:829px;top:52px;width:23.4px;height:425px;background:#f0f0f0;border-right:1px dotted #dcdcdc"></div>
<svg class="a" style="left:837.5px;top:59.5px" width="6" height="6" viewBox="0 0 6 6"><rect x="0.5" y="0.5" width="3.5" height="3" fill="#9aa" stroke="#666" stroke-width="0.6"/><rect x="3" y="3.5" width="2.5" height="2" fill="#333"/></svg>
<div class="a" style="left:685.3px;top:69px;width:143.3px;height:15px;background:linear-gradient(#d8d8d8,#e1e1e1 18%,#e5e5e5 50%,#eaeaea)"></div>
<svg class="a" style="left:688.8px;top:73.7px" width="5.5" height="5.5" viewBox="0 0 5.5 5.5"><rect x="0.5" y="0.5" width="4.5" height="4.5" fill="#f4f4f4" stroke="#8a8a8a" stroke-width="0.8"/><path d="M1.5 2.75h2.5" stroke="#333" stroke-width="0.8"/></svg>
<div class="a t" style="left:696.8px;top:73.0px;font-size:7.3px;color:#222;font-weight:bold;">Text</div>
<svg class="a" style="left:820.1px;top:73.8px" width="7" height="5.6" viewBox="0 0 7 5.6"><rect x="0.5" y="0.6" width="6" height="4.5" fill="#fafafa" stroke="#7d8894" stroke-width="0.8"/><path d="M2 3.2h3" stroke="#aaa" stroke-width="0.7"/><circle cx="1.2" cy="0.8" r="0.6" fill="#3a86e0"/><circle cx="3.5" cy="0.6" r="0.6" fill="#3a86e0"/><circle cx="5.8" cy="0.8" r="0.6" fill="#3a86e0"/></svg>
<div class="a" style="left:692px;top:87.3px;width:84.79999999999995px;height:11.5px;background:#fff;border:1px solid #cfcfcf;border-right:none"></div>
<div class="a" style="left:776.8px;top:87.3px;width:10.200000000000045px;height:11.5px;background:linear-gradient(#5596e4,#2f74d4);border-radius:0 2.5px 2.5px 0"></div>
<svg class="a" style="left:779.4px;top:91.55px" width="5" height="3" viewBox="0 0 5 3"><path d="M0.5 0.5L2.5 2.3L4.5 0.5" fill="none" stroke="#dfeaff" stroke-width="0.9"/></svg>
<div class="a t" style="left:695px;top:89.55px;font-size:7.35px;color:#111;">Times New Roman</div>
<div class="a" style="left:795px;top:87.3px;width:17.200000000000045px;height:11.5px;background:#fff;border:1px solid #cfcfcf;border-right:none"></div>
<div class="a" style="left:812.2px;top:87.3px;width:10.599999999999909px;height:11.5px;background:linear-gradient(#5596e4,#2f74d4);border-radius:0 2.5px 2.5px 0"></div>
<svg class="a" style="left:815.0px;top:91.55px" width="5" height="3" viewBox="0 0 5 3"><path d="M0.5 0.5L2.5 2.3L4.5 0.5" fill="none" stroke="#dfeaff" stroke-width="0.9"/></svg>
<div class="a t" style="left:798px;top:89.55px;font-size:7.35px;color:#111;">12</div>
<div class="a" style="left:690.6px;top:104.5px;width:71.39999999999998px;height:18.5px;background:#f6f6f6;border-radius:1px"></div>
<div class="a t" style="left:694.2px;top:108.1px;font-size:10.2px;color:#2b3440;font-weight:bold;">B</div>
<svg class="a" style="left:706.5px;top:109px" width="7" height="8" viewBox="0 0 7 8"><path d="M5.8 0.3L1.6 7.8" stroke="#2b3440" stroke-width="1.6"/><path d="M3.8 0.5h3M0 7.6h3" stroke="#2b3440" stroke-width="0.5"/></svg>
<svg class="a" style="left:720px;top:109px" width="7.5" height="10" viewBox="0 0 7.5 10"><path d="M1 0.5v4.5a2.5 2.5 0 0 0 5 0v-4.5" fill="none" stroke="#4a5a6c" stroke-width="1.2"/><path d="M0.3 8.6h7" stroke="#6a90c0" stroke-width="0.9"/></svg>
<svg class="a" style="left:731px;top:111.5px" width="4" height="3" viewBox="0 0 4 3"><path d="M0.4 0.6h3.2L2 2.4z" fill="#1a1a1a"/></svg>
<svg class="a" style="left:737.5px;top:111.5px" width="9.5" height="4" viewBox="0 0 9.5 4"><text x="0" y="3.6" font-family="Liberation Sans" font-size="4" font-weight="bold" fill="#333">ABC</text><path d="M0 2h9" stroke="#333" stroke-width="0.7"/></svg>
<svg class="a" style="left:750.5px;top:108.5px" width="9.5" height="9" viewBox="0 0 9.5 9"><text x="0" y="6.5" font-family="Liberation Sans" font-size="7" font-weight="bold" fill="#5b9bdc">A</text><text x="3" y="8.6" font-family="Liberation Sans" font-size="7" font-weight="bold" fill="#2d3d4f">A</text></svg>
<div class="a" style="left:793.5px;top:104px;width:27.5px;height:19.200000000000003px;background:#f6f6f6;border-radius:1px"></div>
<svg class="a" style="left:796.5px;top:108.5px" width="9" height="9" viewBox="0 0 9 9"><rect x="0.5" y="1.5" width="1" height="7" fill="#555"/><text x="2" y="8.6" font-family="Liberation Sans" font-size="7" font-weight="bold" fill="#3d4f63">A</text><circle cx="7" cy="1.8" r="1.4" fill="#c8773a"/></svg>
<svg class="a" style="left:808px;top:108.5px" width="9" height="9" viewBox="0 0 9 9"><rect x="0.5" y="1.5" width="1" height="7" fill="#555"/><text x="2" y="8.6" font-family="Liberation Sans" font-size="7" font-weight="bold" fill="#3d4f63">A</text><circle cx="6" cy="1.8" r="1.4" fill="#c8773a"/></svg>
<div class="a" style="left:690.6px;top:129.5px;width:26.600000000000023px;height:18.0px;background:#f6f6f6;border-radius:1px"></div>
<svg class="a" style="left:692.8px;top:133.5px" width="9" height="9" viewBox="0 0 9 9"><text x="0" y="8" font-family="Liberation Sans" font-size="7.5" font-weight="bold" fill="#55667a">A</text><circle cx="6" cy="3" r="1.8" fill="#3c556f"/><circle cx="6.5" cy="7.3" r="1.5" fill="#c8773a"/></svg>
<svg class="a" style="left:705.8px;top:133.5px" width="9" height="9" viewBox="0 0 9 9"><text x="0" y="8" font-family="Liberation Sans" font-size="7.5" font-weight="bold" fill="#55667a">A</text><circle cx="6" cy="2" r="1.3" fill="#c8773a"/><rect x="4.5" y="5" width="4" height="3" fill="#3c6fb0"/></svg>
<div class="a" style="left:728.8px;top:129.5px;width:20.5px;height:18.0px;background:#f6f6f6;border-radius:1px"></div>
<svg class="a" style="left:730.5px;top:133px" width="10" height="10" viewBox="0 0 10 10"><text x="0" y="5" font-family="Liberation Sans" font-size="5" font-weight="bold" fill="#4a5a6a">AV</text><circle cx="5" cy="3.5" r="1" fill="#c8773a"/><path d="M0.5 8h9" stroke="#3f7fcc" stroke-width="1.2"/><circle cx="2" cy="8" r="1.2" fill="#3f7fcc"/><circle cx="8" cy="8" r="1.2" fill="#3f7fcc"/></svg>
<svg class="a" style="left:743.5px;top:137.2px" width="4" height="3" viewBox="0 0 4 3"><path d="M0.4 0.6h3.2L2 2.4z" fill="#1a1a1a"/></svg>
<div class="a" style="left:764.2px;top:129.5px;width:20.799999999999955px;height:18.0px;background:#f6f6f6;border-radius:1px"></div>
<svg class="a" style="left:766.3px;top:133.5px" width="10" height="10" viewBox="0 0 10 10"><path d="M2 7l3-6.5l3 6.5" fill="none" stroke="#2b2f33" stroke-width="1.8"/><path d="M3.3 5h3.4" stroke="#2b2f33" stroke-width="1.2"/><rect x="0.5" y="7.5" width="9" height="2" fill="#c9702e"/></svg>
<svg class="a" style="left:778.5px;top:137.2px" width="4" height="3" viewBox="0 0 4 3"><path d="M0.4 0.6h3.2L2 2.4z" fill="#1a1a1a"/></svg>
<div class="a" style="left:791.8px;top:129.5px;width:20.90000000000009px;height:18.0px;background:#f6f6f6;border-radius:1px"></div>
<svg class="a" style="left:793.2px;top:132.5px" width="11" height="11" viewBox="0 0 11 11"><rect x="0" y="1" width="11" height="10" rx="3" fill="#fbf0c2" opacity="0.8"/><path d="M2 7l6-6l2 2l-6 6z" fill="#9aa3ad" stroke="#55606b" stroke-width="0.6"/><path d="M1 2l4 5" stroke="#33414f" stroke-width="1.2"/><rect x="1" y="8.5" width="8" height="1.5" fill="#e7c14a"/></svg>
<svg class="a" style="left:806px;top:137.2px" width="4" height="3" viewBox="0 0 4 3"><path d="M0.4 0.6h3.2L2 2.4z" fill="#1a1a1a"/></svg>
<div class="a" style="left:685.3px;top:150px;width:143.3px;height:15px;background:linear-gradient(#d8d8d8,#e1e1e1 18%,#e5e5e5 50%,#eaeaea)"></div>
<svg class="a" style="left:688.8px;top:154.7px" width="5.5" height="5.5" viewBox="0 0 5.5 5.5"><rect x="0.5" y="0.5" width="4.5" height="4.5" fill="#f4f4f4" stroke="#8a8a8a" stroke-width="0.8"/><path d="M1.5 2.75h2.5" stroke="#333" stroke-width="0.8"/></svg>
<div class="a t" style="left:696.8px;top:154.0px;font-size:7.3px;color:#222;font-weight:bold;">Paragraph</div>
<svg class="a" style="left:820.1px;top:154.8px" width="7" height="5.6" viewBox="0 0 7 5.6"><rect x="0.5" y="0.6" width="6" height="4.5" fill="#fafafa" stroke="#7d8894" stroke-width="0.8"/><path d="M2 3.2h3" stroke="#aaa" stroke-width="0.7"/><circle cx="1.2" cy="0.8" r="0.6" fill="#3a86e0"/><circle cx="3.5" cy="0.6" r="0.6" fill="#3a86e0"/><circle cx="5.8" cy="0.8" r="0.6" fill="#3a86e0"/></svg>
<div class="a" style="left:690.1px;top:165.3px;width:53.299999999999955px;height:17.69999999999999px;background:#f6f6f6;border-radius:1px"></div>
<div class="a" style="left:691.1px;top:167.1px;width:12.5px;height:13.300000000000011px;background:#e2e2e2;border:1px solid #b4b4b4;border-radius:1.5px"></div>
<svg class="a" style="left:693.5px;top:171px" width="7.5" height="5.5" viewBox="0 0 7.5 5.5"><rect x="0" y="0.0" width="7.5" height="1" fill="#55616e"/><rect x="0" y="1.35" width="5" height="1" fill="#55616e"/><rect x="0" y="2.7" width="7.5" height="1" fill="#55616e"/><rect x="0" y="4.050000000000001" width="5" height="1" fill="#55616e"/></svg>
<svg class="a" style="left:706.6px;top:171px" width="7.5" height="5.5" viewBox="0 0 7.5 5.5"><rect x="0.0" y="0.0" width="7.5" height="1" fill="#6a7480"/><rect x="1.25" y="1.35" width="5" height="1" fill="#6a7480"/><rect x="0.0" y="2.7" width="7.5" height="1" fill="#6a7480"/><rect x="1.25" y="4.050000000000001" width="5" height="1" fill="#6a7480"/></svg>
<svg class="a" style="left:719.3px;top:171px" width="7.5" height="5.5" viewBox="0 0 7.5 5.5"><rect x="0.0" y="0.0" width="7.5" height="1" fill="#6a7480"/><rect x="2.5" y="1.35" width="5" height="1" fill="#6a7480"/><rect x="0.0" y="2.7" width="7.5" height="1" fill="#6a7480"/><rect x="2.5" y="4.050000000000001" width="5" height="1" fill="#6a7480"/></svg>
<svg class="a" style="left:732.5px;top:171px" width="7.5" height="5.5" viewBox="0 0 7.5 5.5"><rect x="0" y="0.0" width="7.5" height="1" fill="#6a7480"/><rect x="0" y="1.35" width="7.5" height="1" fill="#6a7480"/><rect x="0" y="2.7" width="7.5" height="1" fill="#6a7480"/><rect x="0" y="4.050000000000001" width="7.5" height="1" fill="#6a7480"/></svg>
<div class="a" style="left:690.1px;top:186.1px;width:40.19999999999993px;height:18.400000000000006px;background:#f6f6f6;border-radius:1px"></div>
<svg class="a" style="left:693.2px;top:191.2px" width="8" height="8" viewBox="0 0 8 8"><rect x="0" y="0.7" width="2.4" height="2.4" fill="#2e3f52"/><rect x="3.5" y="0.5" width="4.5" height="1.2" fill="#3f4f60"/><rect x="3.5" y="2.2" width="3.5" height="0.9" fill="#7a8a9a"/><rect x="0" y="4.7" width="2.4" height="2.4" fill="#2e3f52"/><rect x="3.5" y="4.5" width="4.5" height="1.2" fill="#3f4f60"/><rect x="3.5" y="6.2" width="3.5" height="0.9" fill="#7a8a9a"/></svg>
<svg class="a" style="left:704.7px;top:194.6px" width="4" height="3" viewBox="0 0 4 3"><path d="M0.4 0.6h3.2L2 2.4z" fill="#1a1a1a"/></svg>
<svg class="a" style="left:712.5px;top:191.2px" width="8" height="8" viewBox="0 0 8 8"><rect x="0.5" y="0.5" width="1.6" height="2.6" fill="#6b8fbd"/><rect x="3.5" y="0.5" width="4.5" height="1.2" fill="#3f4f60"/><rect x="3.5" y="2.2" width="3.5" height="0.9" fill="#7a8a9a"/><rect x="0.5" y="4.5" width="1.6" height="2.6" fill="#6b8fbd"/><rect x="3.5" y="4.5" width="4.5" height="1.2" fill="#3f4f60"/><rect x="3.5" y="6.2" width="3.5" height="0.9" fill="#7a8a9a"/></svg>
<svg class="a" style="left:723.7px;top:194.6px" width="4" height="3" viewBox="0 0 4 3"><path d="M0.4 0.6h3.2L2 2.4z" fill="#1a1a1a"/></svg>
<div class="a" style="left:748.6px;top:186.1px;width:28.399999999999977px;height:18.400000000000006px;background:#f6f6f6;border-radius:1px"></div>
<svg class="a" style="left:750.8px;top:190.5px" width="19" height="10" viewBox="0 0 19 10"><path d="M1 5l3-3.5l3.5 3.5l-3 3z" fill="#e8eef5" stroke="#3d6fa8" stroke-width="0.8"/><circle cx="7" cy="6.5" r="1" fill="#4a90d9"/><rect x="9.6" y="0.9" width="8" height="8.2" fill="#fff" stroke="#333" stroke-width="1.4"/><rect x="9" y="0.3" width="9.3" height="9.4" fill="none" stroke="#9aa" stroke-width="0.5"/></svg>
<svg class="a" style="left:771.3px;top:194.6px" width="4" height="3" viewBox="0 0 4 3"><path d="M0.4 0.6h3.2L2 2.4z" fill="#1a1a1a"/></svg>
<div class="a t" style="left:690px;top:206.6px;font-size:7.3px;color:#000;">Spacing:</div>
<div class="a t" style="left:761.9px;top:206.6px;font-size:7.3px;color:#000;">Indent:</div>
<div class="a" style="left:690.6px;top:217.2px;width:26.5px;height:17.30000000000001px;background:#f6f6f6;border-radius:1px"></div>
<svg class="a" style="left:693.5px;top:221.5px" width="9" height="9" viewBox="0 0 9 9"><rect x="3.5" y="1.5" width="5" height="1.6" fill="#7a8a9a"/><rect x="3.5" y="5.5" width="5" height="1.6" fill="#7a8a9a"/><circle cx="1.8" cy="1.5" r="1.5" fill="#4a90d9"/><circle cx="1.8" cy="7" r="1.5" fill="#4a90d9"/><rect x="0" y="3.6" width="9" height="1.2" fill="#4a5a6a"/></svg>
<svg class="a" style="left:705.6px;top:221.5px" width="9.5" height="9" viewBox="0 0 9.5 9"><rect x="4" y="0.5" width="5" height="8" fill="#a0a8b0"/><path d="M4 2.5h5M4 4.5h5M4 6.5h5" stroke="#eee" stroke-width="0.7"/><circle cx="1.8" cy="2" r="1.5" fill="#4a90d9"/><circle cx="1.8" cy="6.5" r="1.5" fill="#3a5a7a"/></svg>
<div class="a" style="left:761.9px;top:217.2px;width:42.80000000000007px;height:17.30000000000001px;background:#f6f6f6;border-radius:1px"></div>
<svg class="a" style="left:764.2px;top:222px" width="10.5" height="8" viewBox="0 0 10.5 8"><path d="M4 1.5h6M5 3.5h5M5 5.5h5M4 7h6" stroke="#4a5f75" stroke-width="0.9"/><path d="M0.5 4.5l3-2.5v5z" fill="#c8773a"/><rect x="2" y="3.7" width="4" height="1.6" fill="#c8773a"/></svg>
<svg class="a" style="left:777.1px;top:222px" width="10.5" height="8" viewBox="0 0 10.5 8"><path d="M4 1.5h6M5 3.5h5M5 5.5h5M4 7h6" stroke="#4a5f75" stroke-width="0.9"/><path d="M0.5 4.5l3-2.5v5z" fill="#c8773a"/><rect x="2" y="3.7" width="4" height="1.6" fill="#c8773a"/></svg>
<svg class="a" style="left:790px;top:221.5px" width="12" height="9" viewBox="0 0 12 9"><path d="M1 3.5l2.5-2.5v5z" fill="#5dbb4a"/><path d="M3 3.5h4" stroke="#5dbb4a" stroke-width="1.2"/><path d="M8 1.5h3.5M10.5 1.5v7" stroke="#667" stroke-width="1.3"/><path d="M9.5 3.5h2M9.5 5.5h2M9.5 7.5h2" stroke="#889" stroke-width="0.8"/></svg>
<div class="a" style="left:706px;top:243.4px;width:38.700000000000045px;height:13.200000000000017px;background:#fff;border:1px solid #cfcfcf"></div>
<div class="a t" style="left:707.8px;top:245.8px;font-size:7.5px;color:#1e1e1e;">0.00 &quot;</div>
<div class="a" style="left:749.2px;top:243.9px;width:7.2999999999999545px;height:12.700000000000017px;background:#fafafa;border:1px solid #8f8f8f;border-radius:3.5px"></div>
<svg class="a" style="left:750.65px;top:245.6px" width="4.4" height="9" viewBox="0 0 4.4 9"><path d="M0.7 2.6L2.2 1.1L3.7 2.6M0.7 6.4L2.2 7.9L3.7 6.4" fill="none" stroke="#2a2a2a" stroke-width="0.9"/></svg>
<div class="a" style="left:778px;top:243.4px;width:34.39999999999998px;height:13.200000000000017px;background:#fff;border:1px solid #cfcfcf"></div>
<div class="a t" style="left:779.8px;top:245.8px;font-size:7.5px;color:#1e1e1e;">0.00 &quot;</div>
<div class="a" style="left:816.4px;top:243.9px;width:7.300000000000068px;height:12.700000000000017px;background:#fafafa;border:1px solid #8f8f8f;border-radius:3.5px"></div>
<svg class="a" style="left:817.8499999999999px;top:245.6px" width="4.4" height="9" viewBox="0 0 4.4 9"><path d="M0.7 2.6L2.2 1.1L3.7 2.6M0.7 6.4L2.2 7.9L3.7 6.4" fill="none" stroke="#2a2a2a" stroke-width="0.9"/></svg>
<div class="a" style="left:706px;top:262px;width:38.700000000000045px;height:13.5px;background:#fff;border:1px solid #cfcfcf"></div>
<div class="a t" style="left:707.8px;top:264.4px;font-size:7.5px;color:#1e1e1e;">0.00 &quot;</div>
<div class="a" style="left:749.2px;top:262.5px;width:7.2999999999999545px;height:13.0px;background:#fafafa;border:1px solid #8f8f8f;border-radius:3.5px"></div>
<svg class="a" style="left:750.65px;top:264.2px" width="4.4" height="9" viewBox="0 0 4.4 9"><path d="M0.7 2.6L2.2 1.1L3.7 2.6M0.7 6.4L2.2 7.9L3.7 6.4" fill="none" stroke="#2a2a2a" stroke-width="0.9"/></svg>
<div class="a" style="left:778px;top:262px;width:34.39999999999998px;height:13.5px;background:#fff;border:1px solid #cfcfcf"></div>
<div class="a t" style="left:779.8px;top:264.4px;font-size:7.5px;color:#1e1e1e;">0.00 &quot;</div>
<div class="a" style="left:816.4px;top:262.5px;width:7.300000000000068px;height:13.0px;background:#fafafa;border:1px solid #8f8f8f;border-radius:3.5px"></div>
<svg class="a" style="left:817.8499999999999px;top:264.2px" width="4.4" height="9" viewBox="0 0 4.4 9"><path d="M0.7 2.6L2.2 1.1L3.7 2.6M0.7 6.4L2.2 7.9L3.7 6.4" fill="none" stroke="#2a2a2a" stroke-width="0.9"/></svg>
<div class="a" style="left:778px;top:281.7px;width:34.39999999999998px;height:13.5px;background:#fff;border:1px solid #cfcfcf"></div>
<div class="a t" style="left:779.8px;top:284.09999999999997px;font-size:7.5px;color:#1e1e1e;">0.00 &quot;</div>
<div class="a" style="left:816.4px;top:282.2px;width:7.300000000000068px;height:13.0px;background:#fafafa;border:1px solid #8f8f8f;border-radius:3.5px"></div>
<svg class="a" style="left:817.8499999999999px;top:283.9px" width="4.4" height="9" viewBox="0 0 4.4 9"><path d="M0.7 2.6L2.2 1.1L3.7 2.6M0.7 6.4L2.2 7.9L3.7 6.4" fill="none" stroke="#2a2a2a" stroke-width="0.9"/></svg>
<svg class="a" style="left:690px;top:245px" width="8.5" height="9" viewBox="0 0 8.5 9"><path d="M4.25 0v3M3 1h2.5" stroke="#4a5a6a" stroke-width="0.7"/><rect x="0.5" y="3.8" width="7.5" height="1.2" fill="#4a5a6a"/><rect x="0.5" y="5.5" width="7.5" height="3" fill="#7a8fa6"/></svg>
<svg class="a" style="left:690px;top:264px" width="8.5" height="9" viewBox="0 0 8.5 9"><rect x="0.5" y="0.5" width="7.5" height="3" fill="#7a8fa6"/><rect x="0.5" y="3.8" width="7.5" height="1.2" fill="#4a5a6a"/><path d="M4.25 5v4M3 8h2.5" stroke="#4a5a6a" stroke-width="0.7"/></svg>
<svg class="a" style="left:760.5px;top:245px" width="10" height="9" viewBox="0 0 10 9"><path d="M0.3 1.5h3.5M2.8 0.5l1 1l-1 1" stroke="#34495e" stroke-width="0.8" fill="none"/><path d="M5 1.5h4.5M5 4h4.5M5 6.5h4.5M5 8.5h4.5" stroke="#6f8499" stroke-width="1"/></svg>
<svg class="a" style="left:760.5px;top:264px" width="10" height="9" viewBox="0 0 10 9"><path d="M1 1.5h4M1 4h4M1 6.5h4M1 8.5h4" stroke="#6f8499" stroke-width="1"/><path d="M5.8 1.5h3.5M8.3 0.5l1 1l-1 1" stroke="#34495e" stroke-width="0.8" fill="none"/></svg>
<div class="a" style="left:690.3px;top:279.7px;width:21.700000000000045px;height:17.30000000000001px;background:#f6f6f6;border-radius:1px"></div>
<svg class="a" style="left:692.5px;top:284px" width="9" height="8" viewBox="0 0 9 8"><path d="M1.2 0.5v7M0.2 1.5l1-1l1 1M0.2 6.5l1 1l1-1" stroke="#3a4a5a" stroke-width="0.8" fill="none"/><path d="M3.5 1.2h5M3.5 3.2h5M3.5 5.2h5M3.5 7.2h5" stroke="#4a6a8a" stroke-width="1"/></svg>
<svg class="a" style="left:703.8px;top:287px" width="4" height="3" viewBox="0 0 4 3"><path d="M0.4 0.6h3.2L2 2.4z" fill="#1a1a1a"/></svg>
<svg class="a" style="left:760.5px;top:283.5px" width="10" height="9" viewBox="0 0 10 9"><path d="M0.5 1h3M4.5 1h5M0.5 3.5h9M0.5 6h9M0.5 8.3h9" stroke="#5f7489" stroke-width="1"/></svg>
<div class="a" style="left:685.3px;top:303px;width:143.3px;height:15px;background:linear-gradient(#d8d8d8,#e1e1e1 18%,#e5e5e5 50%,#eaeaea);border-bottom:1px dotted #d6d6d6"></div>
<svg class="a" style="left:688.8px;top:307.7px" width="5.5" height="5.5" viewBox="0 0 5.5 5.5"><rect x="0.5" y="0.5" width="4.5" height="4.5" fill="#f4f4f4" stroke="#8a8a8a" stroke-width="0.8"/><path d="M1.5 2.75h2.5" stroke="#333" stroke-width="0.8"/><path d="M2.75 1.5v2.5" stroke="#333" stroke-width="0.8"/></svg>
<div class="a t" style="left:696.8px;top:307.0px;font-size:7.3px;color:#222;font-weight:bold;">Page</div>
<svg class="a" style="left:820.1px;top:307.8px" width="7" height="5.6" viewBox="0 0 7 5.6"><rect x="0.5" y="0.6" width="6" height="4.5" fill="#fafafa" stroke="#7d8894" stroke-width="0.8"/><path d="M2 3.2h3" stroke="#aaa" stroke-width="0.7"/><circle cx="1.2" cy="0.8" r="0.6" fill="#3a86e0"/><circle cx="3.5" cy="0.6" r="0.6" fill="#3a86e0"/><circle cx="5.8" cy="0.8" r="0.6" fill="#3a86e0"/></svg>
<div class="a" style="left:831.7px;top:75.8px;width:17.5px;height:17px;background:#e8e8e8;border:1px solid #d2d2d2;border-radius:2.5px"></div>
<svg class="a" style="left:833.5px;top:77px" width="14" height="14" viewBox="0 0 14 14"><path d="M2 2.5l4-1.5l4 1.5v7l-4 2l-4-2z" fill="#3a80d8"/><path d="M6 5l5-1.5l2 3l-2 5.5l-5-1z" fill="#86c15a"/><circle cx="9.5" cy="3" r="1.5" fill="#e3c04e"/></svg>
<svg class="a" style="left:833.5px;top:97px" width="14" height="14" viewBox="0 0 14 14"><circle cx="5" cy="4" r="3.2" fill="#dfe4ea" stroke="#6b7784" stroke-width="0.7"/><path d="M2 12l4-6l5 4l-3 3z" fill="#2d4260"/><rect x="8" y="6" width="5" height="5" fill="#3d86dd"/><circle cx="11" cy="2.5" r="1.5" fill="#d6a05a"/></svg>
<svg class="a" style="left:833.5px;top:117px" width="14" height="14" viewBox="0 0 14 14"><path d="M1 5l9-4l3 7l-9 4z" fill="#f4f6f9" stroke="#7f8a96" stroke-width="0.7"/><path d="M3 8l3-3l2 2l2-3l2 4z" fill="#6aaad8"/><circle cx="5" cy="5" r="1.2" fill="#7bbf55"/></svg>
<svg class="a" style="left:833.5px;top:136.5px" width="14" height="14" viewBox="0 0 14 14"><circle cx="7" cy="7" r="6" fill="#f7eede" stroke="#d29240" stroke-width="1.2"/><path d="M9.5 3.5l-5 7" stroke="#3a6fc0" stroke-width="1.3"/><path d="M7 7l-2.5 3.5" stroke="#c8602a" stroke-width="1.3"/></svg>
<div class="a" style="left:19px;top:476.3px;width:833.4px;height:13.7px;background:linear-gradient(#e6e6e6,#ebebeb 30%,#e6e6e6)"></div>
<div class="a t" style="left:24.4px;top:480.6px;font-size:7.2px;color:#111;">Page 1 / 1</div>
<div class="a" style="left:160.4px;top:478px;width:1px;height:11px;background:#d8d8d8"></div>
<div class="a t" style="left:164.5px;top:480.6px;font-size:7.2px;color:#111;">Default</div>
<div class="a" style="left:293.8px;top:478px;width:1px;height:11px;background:#d8d8d8"></div>
<div class="a t" style="left:347.8px;top:480.6px;font-size:7.2px;color:#111;">Unknown</div>
<div class="a" style="left:434px;top:478px;width:1px;height:11px;background:#d8d8d8"></div>
<div class="a t" style="left:436.8px;top:480.6px;font-size:7.2px;color:#111;">INSRT</div>
<div class="a" style="left:462.8px;top:478px;width:1px;height:11px;background:#d8d8d8"></div>
<div class="a t" style="left:465.5px;top:480.6px;font-size:7.2px;color:#111;">STD</div>
<div class="a" style="left:486.7px;top:478px;width:1px;height:11px;background:#d8d8d8"></div>
<div class="a" style="left:495px;top:478px;width:1px;height:11px;background:#d8d8d8"></div>
<div class="a" style="left:510.3px;top:477.5px;width:1px;height:12px;background:#d8d8d8"></div>
<div class="a" style="left:693.8px;top:478px;width:1px;height:11px;background:#d8d8d8"></div>
<svg class="a" style="left:696.5px;top:480.5px" width="36" height="7" viewBox="0 0 36 7"><path d="M1.3 0.5h3.5l1.2 1.2v5h-4.7z" fill="#fafafa" stroke="#8a96a2" stroke-width="0.8"/><rect x="10" y="0.6" width="5.2" height="6" fill="#e3ebf4" stroke="#4a6f99" stroke-width="0.9"/><rect x="15.4" y="0.6" width="5.2" height="6" fill="#e3ebf4" stroke="#4a6f99" stroke-width="0.9"/><path d="M24 0.8l4.5 0.3v5.6l-4.5-0.3z M28.5 1.1l4.5-0.3v5.6l-4.5 0.3z" fill="#f5f5f5" stroke="#8a96a2" stroke-width="0.8"/></svg>
<div class="a" style="left:736px;top:478px;width:1px;height:11px;background:#d8d8d8"></div>
<svg class="a" style="left:738px;top:479.5px" width="76" height="9" viewBox="0 0 76 9"><circle cx="4.4" cy="4.5" r="3.3" fill="none" stroke="#5a6a7a" stroke-width="0.8"/><path d="M2.6 4.5h3.6" stroke="#333" stroke-width="0.8"/><path d="M10 4.5h56" stroke="#a8a8a8" stroke-width="0.8"/><path d="M22.9 1.5v6" stroke="#888" stroke-width="0.7"/><circle cx="37.3" cy="4.5" r="2.2" fill="#5a6e84" stroke="#334" stroke-width="0.5"/><circle cx="71" cy="4.5" r="3.3" fill="none" stroke="#5a6a7a" stroke-width="0.8"/><path d="M69.2 4.5h3.6M71 2.7v3.6" stroke="#333" stroke-width="0.8"/></svg>
<div class="a t" style="left:819.5px;top:480.6px;font-size:7.2px;color:#111;">100 %</div>
</body></html>
